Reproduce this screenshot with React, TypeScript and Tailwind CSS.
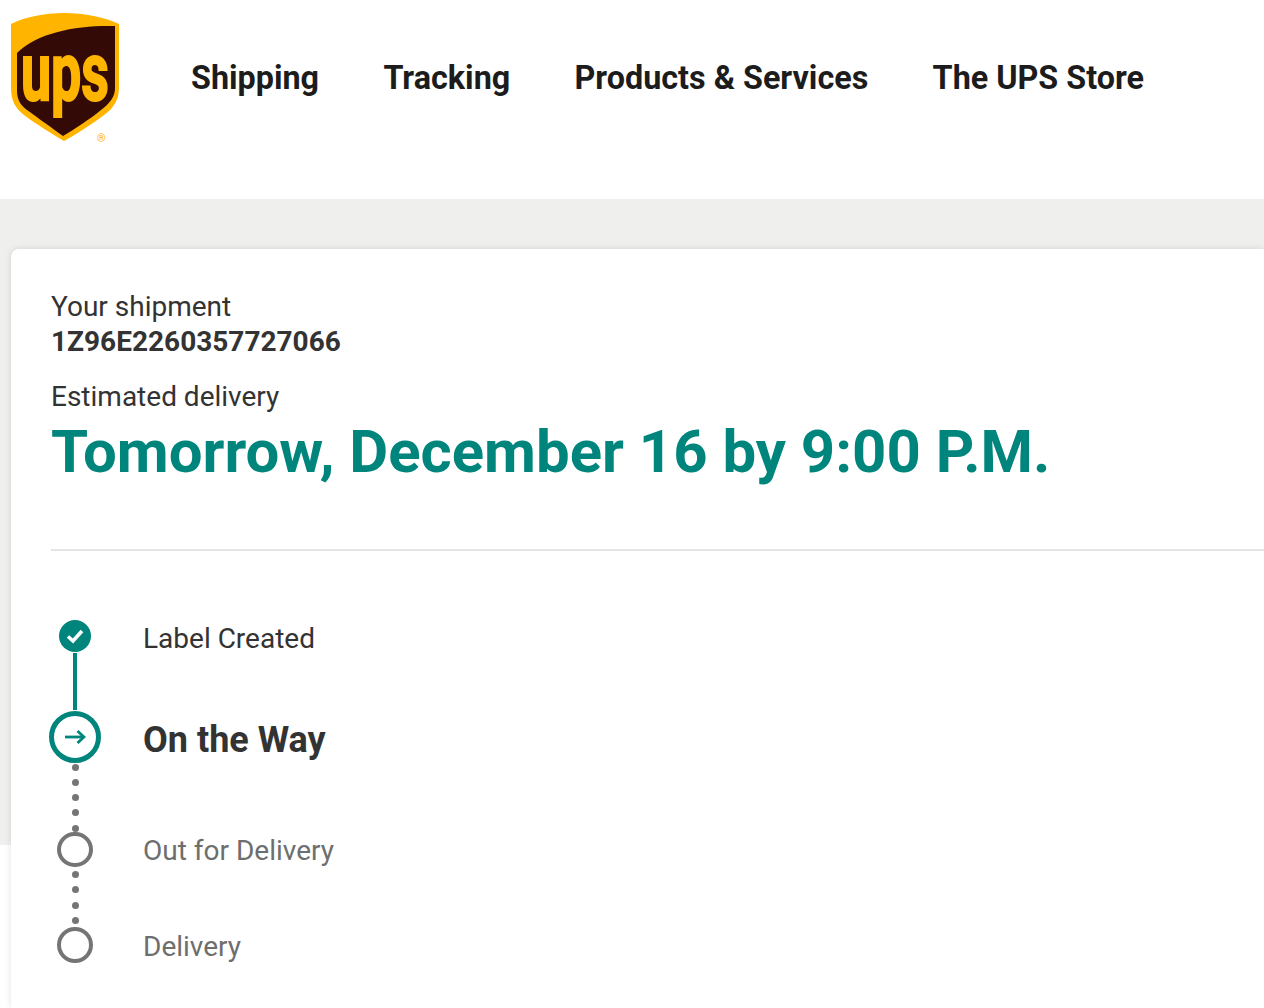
const NAV_ITEMS = ["Shipping", "Tracking", "Products & Services", "The UPS Store"];

function UpsLogo() {
  return (
    <svg width="120" height="150" viewBox="0 0 120 150" className="block">
      <path
        d="M64 13C44 13 25 17 11 24V88C11 100 15 108 24 115C36 124 52 134 64 141C77 134 92 124 104 115C114 108 119 99 119 88V24C104 17 85 13 64 13Z"
        fill="#ffb500"
      />
      <path
        d="M115 26C78 25 38 32 17 53V90C17 98 19 104 27 110C38 118 52 128 63 136C75 129 90 119 101 110C110 103 115 97 115 88Z"
        fill="#330a05"
      />
      <text
        transform="translate(21 100) scale(1 1.46)"
        fontFamily="Roboto, sans-serif"
        fontWeight="700"
        fontSize="56"
        textLength="88"
        lengthAdjust="spacingAndGlyphs"
        fill="#ffb500"
        stroke="#ffb500"
        strokeWidth="1.4"
      >
        ups
      </text>
      <text x="97" y="142" fontFamily="Roboto, sans-serif" fontSize="11" fill="#ffb500">
        ®
      </text>
    </svg>
  );
}

function Dots({ count }: { count: number }) {
  return (
    <div className="flex flex-col items-center gap-[8.3px]">
      {Array.from({ length: count }).map((_, i) => (
        <span key={i} className="h-[7px] w-[7px] shrink-0 rounded-full bg-[#757575]" />
      ))}
    </div>
  );
}

export default function App() {
  return (
    <div className="h-[1008px] overflow-hidden bg-white font-['Roboto',sans-serif]">
      <header className="flex h-[199px] items-start">
        <div className="h-[150px] w-[120px] shrink-0">
          <UpsLogo />
        </div>
        <nav className="ml-[71px] mt-[57.5px] flex gap-[64.3px] text-[32.35px] font-bold leading-[40px] text-[#1c1c1c]">
          {NAV_ITEMS.map((item) => (
            <a key={item} className="whitespace-nowrap">
              {item}
            </a>
          ))}
        </nav>
      </header>

      <main className="h-[646px] bg-[#efefee] pl-[11px] pt-[50px]">
        <section className="h-[759px] rounded-tl-[8px] bg-white pl-[40px] pt-[41px] shadow-[0_0_6px_rgba(0,0,0,0.12)]">
          <p className="text-[28px] leading-[34px] text-[#333]">Your shipment</p>
          <p className="text-[28px] font-bold leading-[36px] text-[#333]">1Z96E2260357727066</p>
          <p className="mt-[20px] text-[28px] leading-[34px] text-[#333]">Estimated delivery</p>
          <h1 className="text-[59.9px] font-bold leading-[76px] text-[#00857d]">
            Tomorrow, December 16 by 9:00 P.M.
          </h1>
          <hr className="mt-[59px] border-t-2 border-[#e5e5e5]" />

          <div className="mt-[69px] grid grid-cols-[48px_1fr] gap-x-[44px]">
            <div className="flex justify-center">
              <span className="flex h-[32px] w-[32px] shrink-0 items-center justify-center rounded-full bg-[#00857d]">
                <svg width="22" height="22" viewBox="0 0 22 22" fill="none">
                  <path d="M4 11.5L9 16L18 6" stroke="#fff" strokeWidth="3.6" />
                </svg>
              </span>
            </div>
            <p className="self-center pt-[6px] text-[28px] leading-[26px] text-[#333]">Label Created</p>

            <div className="flex h-[59px] justify-center pt-[1px]">
              <span className="h-[57px] w-[4px] bg-[#00857d]" />
            </div>
            <div />

            <div className="flex justify-center">
              <span className="flex h-[52px] w-[52px] shrink-0 items-center justify-center rounded-full border-[5px] border-[#00857d]">
                <svg width="22" height="16" viewBox="0 0 22 16" fill="none" stroke="#00857d" strokeWidth="2.8">
                  <path d="M1 8H20" />
                  <path d="M13.5 2L20 8L13.5 14" />
                </svg>
              </span>
            </div>
            <p className="self-center pt-[5px] text-[36px] font-bold leading-[44px] text-[#333]">On the Way</p>

            <div className="flex h-[69px] justify-center pt-[0.5px]">
              <Dots count={5} />
            </div>
            <div />

            <div className="flex justify-center">
              <span className="h-[35px] w-[36px] shrink-0 rounded-full border-[4px] border-[#757575] bg-white" />
            </div>
            <p className="self-center pt-[2px] text-[28px] leading-[33px] text-[#6e6e6e]">Out for Delivery</p>

            <div className="flex h-[60px] justify-center pt-[4px]">
              <Dots count={4} />
            </div>
            <div />

            <div className="flex justify-center">
              <span className="h-[36px] w-[36px] shrink-0 rounded-full border-[4px] border-[#757575] bg-white" />
            </div>
            <p className="self-center pt-[4px] text-[28px] leading-[32px] text-[#6e6e6e]">Delivery</p>
          </div>
        </section>
      </main>
    </div>
  );
}
